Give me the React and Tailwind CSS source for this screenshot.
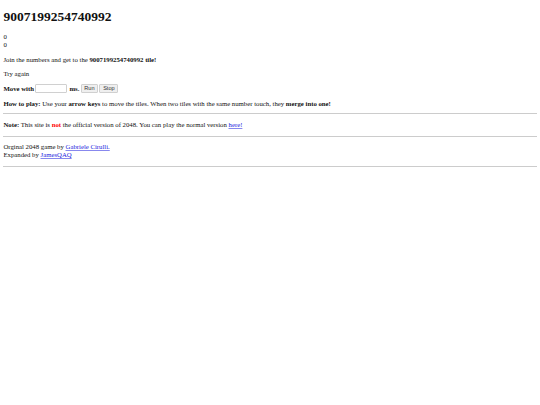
import React from 'react';

const App = () => {
  return (
    <div className="min-h-[405px] bg-white px-[3.4px] pt-[3.4px] font-['Liberation_Serif',serif] text-[6.75px] leading-[7.75px] text-[#111]">
      <h1 className="mt-[5.5px] mb-[9px] text-[13.5px] leading-[15.5px] font-bold">9007199254740992</h1>

      <div>0</div>
      <div>0</div>

      <p className="mt-[6.75px]">
        Join the numbers and get to the <strong>9007199254740992 tile!</strong>
      </p>

      <p className="mt-[6.75px]">Try again</p>

      {/* Auto run controls */}
      <div className="mt-[6px] flex h-[10px] items-center">
        <strong>Move with</strong>
        <input
          type="text"
          className="ml-[1.5px] h-[9px] w-[32px] rounded-[1px] border border-[#d0d0d0] bg-white"
        />
        <strong className="ml-[2px]">ms.</strong>
        <button className="ml-[1.5px] h-[9px] w-[17px] rounded-[1px] border border-[#d0d0d0] bg-[#efefef] text-center font-['Liberation_Sans',sans-serif] text-[5.6px] leading-[7px] text-[#333]">
          Run
        </button>
        <button className="ml-[1.5px] h-[9px] w-[19px] rounded-[1px] border border-[#d0d0d0] bg-[#efefef] text-center font-['Liberation_Sans',sans-serif] text-[5.6px] leading-[7px] text-[#333]">
          Stop
        </button>
      </div>

      <p className="mt-[6px]">
        <strong>How to play:</strong> Use your <strong>arrow keys</strong> to move the tiles. When two
        tiles with the same number touch, they <strong>merge into one!</strong>
      </p>

      <hr className="mt-[5.75px] border-t border-[#cccccc]" />

      <p className="mt-[6.75px]">
        <strong>Note:</strong> This site is <strong className="text-[#ff0000]">not</strong> the official
        version of 2048. You can play the normal version{' '}
        <a href="#" className="text-[#2222dd] underline decoration-[#8888ee]">here!</a>
      </p>

      <hr className="mt-[6.75px] border-t border-[#cccccc]" />

      <p className="mt-[6.75px]">
        Orginal 2048 game by <a href="#" className="text-[#2222dd] underline decoration-[#8888ee]">Gabriele Cirulli.</a>
        <br />
        Expanded by <a href="#" className="text-[#2222dd] underline decoration-[#8888ee]">JamesQAQ</a>
      </p>

      <hr className="mt-[6.75px] border-t border-[#cccccc]" />
    </div>
  );
};

export default App;
